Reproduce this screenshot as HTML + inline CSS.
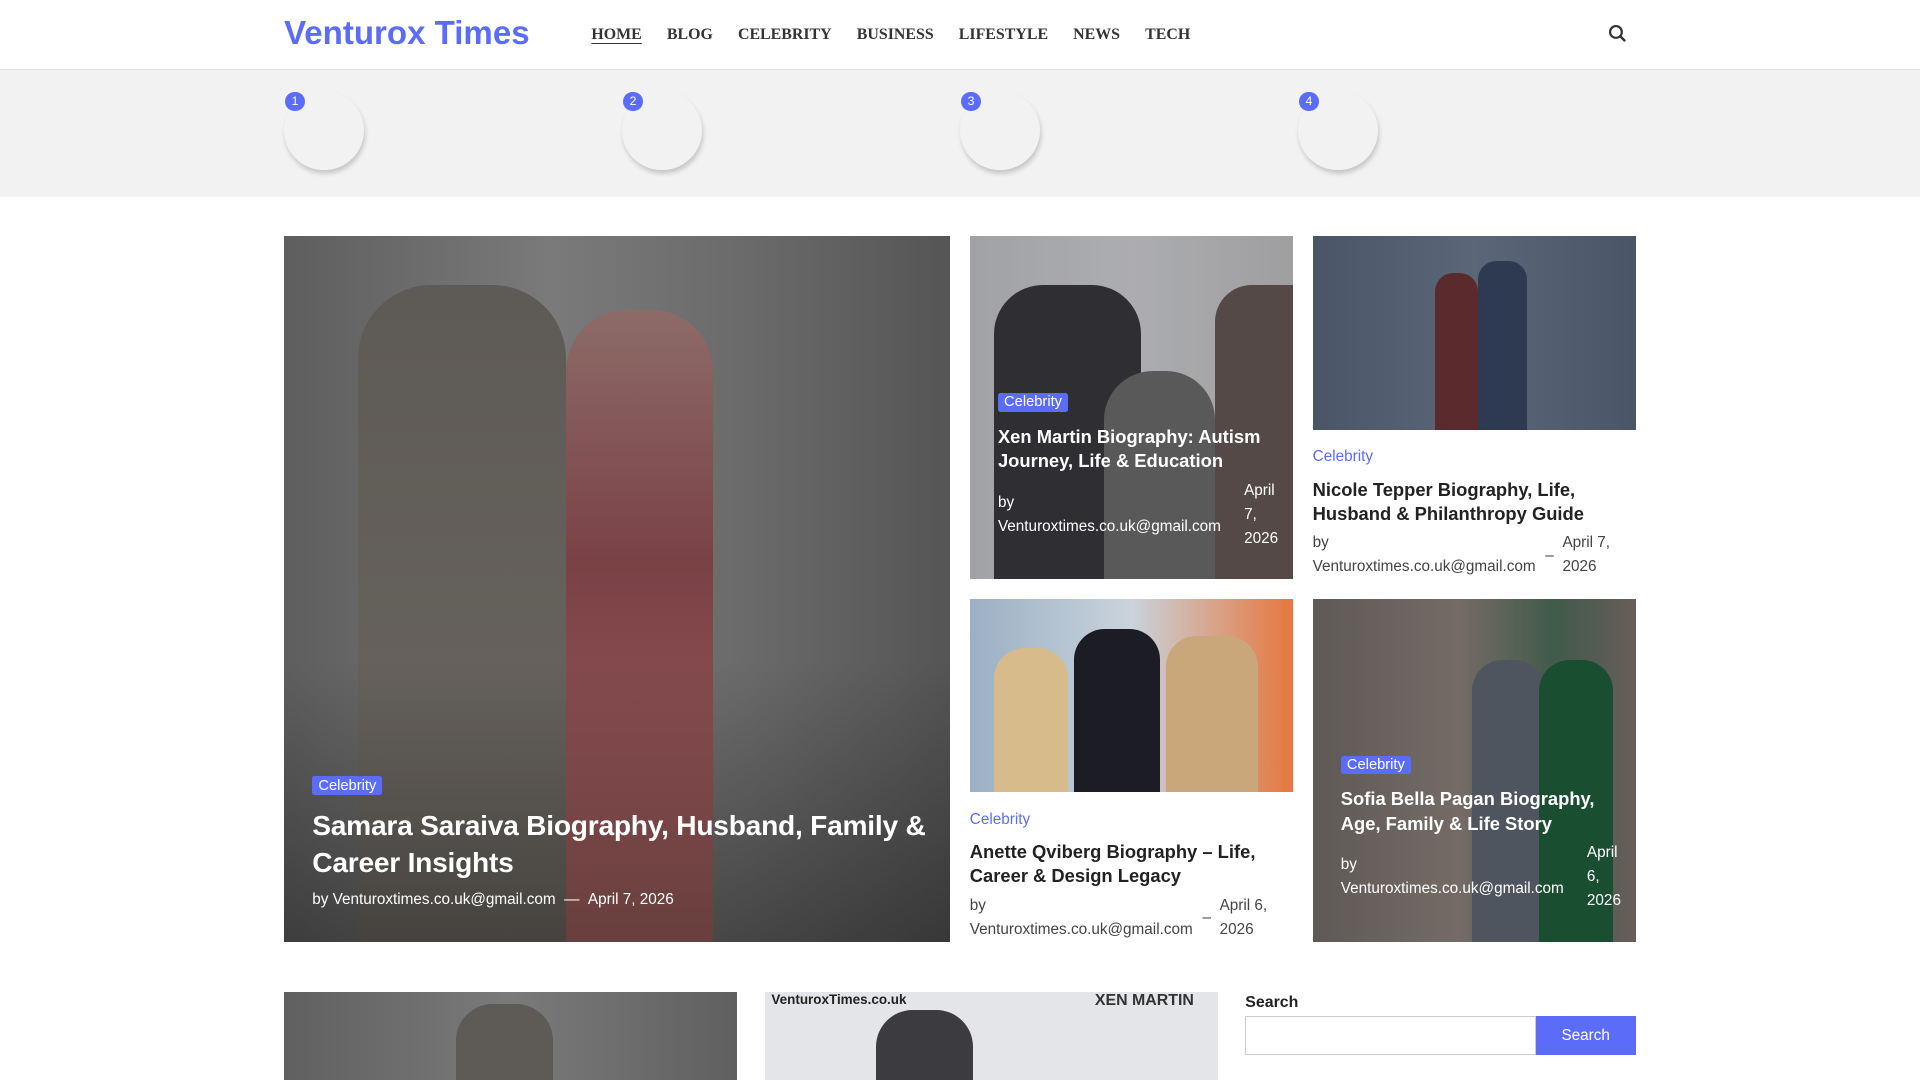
<!DOCTYPE html>
<html><head><meta charset="utf-8"><style>
*{box-sizing:border-box;margin:0;padding:0}
html,body{width:1920px;height:1080px;overflow:hidden;background:#fff}
#w{width:1568px;height:882px;zoom:1.22449;position:relative;font-family:"Liberation Sans",sans-serif;color:#222}
.hdr{position:absolute;left:0;top:0;width:1568px;height:57px;border-bottom:1px solid #e2e2e2;background:#fff}
.logo{position:absolute;left:232px;top:12px;font-size:27px;font-weight:bold;color:#5b6cf9;letter-spacing:0px}
.nav{position:absolute;left:483px;top:21px;font-family:"Liberation Serif",serif;font-size:13px;font-weight:bold;color:#333}
.nav span{margin-right:20.5px}
.nav span.a{text-decoration:underline;text-underline-offset:3px}
.strip{position:absolute;left:0;top:57px;width:1568px;height:104px;background:#f2f2f2}
.c{position:absolute;top:17px;width:65px;height:65px;border-radius:50%;background:#f2f2f2;box-shadow:1px 3px 4px rgba(0,0,0,.18)}
.n{position:absolute;top:18px;width:16px;height:16px;border-radius:50%;background:#5b6cf9;color:#fff;font-size:10px;text-align:center;line-height:16px}
.card{position:absolute;overflow:hidden}
.img{position:absolute;inset:0}
.tag{display:inline-block;background:#5b6cf9;color:#fff;font-size:12px;padding:1px 5px;border-radius:2px}
.ov{position:absolute;color:#fff}
.t{font-weight:bold;font-size:15px;line-height:20px}
.meta{font-size:12.5px;line-height:19.5px;color:#444}
.cat{color:#5b6cf9;font-size:12.5px}
</style></head><body><div id="w">
<div class="hdr">
<div class="logo">Venturox Times</div>
<div class="nav"><span class="a">HOME</span><span>BLOG</span><span>CELEBRITY</span><span>BUSINESS</span><span>LIFESTYLE</span><span>NEWS</span><span>TECH</span></div>
<svg style="position:absolute;left:1313px;top:20px" width="16" height="16" viewBox="0 0 16 16"><circle cx="6.5" cy="6.5" r="4.8" fill="none" stroke="#333" stroke-width="1.8"/><path d="M10 10l4 4" stroke="#333" stroke-width="2"/></svg>
</div>
<div class="strip">
<div class="c" style="left:232px"></div><div class="n" style="left:233px">1</div>
<div class="c" style="left:508px"></div><div class="n" style="left:509px">2</div>
<div class="c" style="left:784px"></div><div class="n" style="left:785px">3</div>
<div class="c" style="left:1060px"></div><div class="n" style="left:1061px">4</div>
</div>

<div class="card" style="left:232px;top:193px;width:544px;height:576px">
<div class="img" style="background:linear-gradient(90deg,#5e5e5e,#7a7a7a 40%,#6a6a6a 70%,#555)"></div>
<div style="position:absolute;left:60px;top:40px;width:170px;height:536px;background:linear-gradient(#5e5a55,#6b6660);border-radius:60px 60px 0 0"></div>
<div style="position:absolute;left:230px;top:60px;width:120px;height:516px;background:linear-gradient(#8d6b68,#7a4146 40%,#a0605f);border-radius:50px 50px 0 0"></div>
<div style="position:absolute;inset:0;background:linear-gradient(transparent 60%,rgba(0,0,0,.35))"></div>
<div class="ov" style="left:23px;top:438px"><span class="tag">Celebrity</span></div>
<div class="ov" style="left:23px;top:467px;font-weight:bold;font-size:23px;line-height:30px;width:520px;letter-spacing:-0.2px">Samara Saraiva Biography, Husband, Family &amp; Career Insights</div>
<div class="ov" style="left:23px;top:535px;font-size:12.5px">by Venturoxtimes.co.uk@gmail.com &nbsp;— &nbsp;April 7, 2026</div>
</div>

<div class="card" style="left:792px;top:193px;width:264px;height:280px">
<div class="img" style="background:linear-gradient(90deg,#c9cbd0,#d8d9dd 50%,#c7c6c8)"></div>
<div style="position:absolute;left:20px;top:40px;width:120px;height:240px;background:#3b3b40;border-radius:40px 40px 0 0"></div>
<div style="position:absolute;left:110px;top:110px;width:90px;height:170px;background:#707070;border-radius:40px 40px 0 0"></div>
<div style="position:absolute;left:200px;top:40px;width:64px;height:240px;background:#6a5c58;border-radius:30px 0 0 0"></div>
<div style="position:absolute;inset:0;background:rgba(0,0,0,.2)"></div>
<div class="ov" style="left:23px;top:125px"><span class="tag">Celebrity</span></div>
<div class="ov t" style="left:23px;top:154px;width:230px">Xen Martin Biography: Autism Journey, Life &amp; Education</div>
<div class="ov" style="left:23px;top:208px;font-size:12.5px;line-height:19.5px">by<br>Venturoxtimes.co.uk@gmail.com</div>
<div class="ov" style="left:224px;top:198px;font-size:12.5px;line-height:19.5px">April<br>7,<br>2026</div>
</div>

<div class="card" style="left:1072px;top:193px;width:264px;height:158px">
<div class="img" style="background:linear-gradient(90deg,#4a5566,#5b6678 50%,#4a5566)"></div>
<div style="position:absolute;left:100px;top:30px;width:35px;height:128px;background:#5a2a2c;border-radius:15px 15px 0 0"></div>
<div style="position:absolute;left:135px;top:20px;width:40px;height:138px;background:#2e3a52;border-radius:15px 15px 0 0"></div>
</div>
<div class="cat" style="position:absolute;left:1072px;top:366px">Celebrity</div>
<div class="t" style="position:absolute;left:1072px;top:390px;width:260px">Nicole Tepper Biography, Life, Husband &amp; Philanthropy Guide</div>
<div class="meta" style="position:absolute;left:1072px;top:434px">by<br>Venturoxtimes.co.uk@gmail.com</div>
<div class="meta" style="position:absolute;left:1262px;top:444px">–</div>
<div class="meta" style="position:absolute;left:1276px;top:434px">April 7,<br>2026</div>

<div class="card" style="left:792px;top:489px;width:264px;height:158px">
<div class="img" style="background:linear-gradient(90deg,#9bb0c4,#c9d3dc 50%,#e57a44 98%)"></div>
<div style="position:absolute;left:20px;top:40px;width:60px;height:118px;background:#d8bb8a;border-radius:25px 25px 0 0"></div>
<div style="position:absolute;left:85px;top:25px;width:70px;height:133px;background:#1c1d24;border-radius:25px 25px 0 0"></div>
<div style="position:absolute;left:160px;top:30px;width:75px;height:128px;background:#c9a77a;border-radius:25px 25px 0 0"></div>
</div>
<div class="cat" style="position:absolute;left:792px;top:662px">Celebrity</div>
<div class="t" style="position:absolute;left:792px;top:686px;width:260px">Anette Qviberg Biography – Life, Career &amp; Design Legacy</div>
<div class="meta" style="position:absolute;left:792px;top:730px">by<br>Venturoxtimes.co.uk@gmail.com</div>
<div class="meta" style="position:absolute;left:982px;top:740px">–</div>
<div class="meta" style="position:absolute;left:996px;top:730px">April 6,<br>2026</div>

<div class="card" style="left:1072px;top:489px;width:264px;height:280px">
<div class="img" style="background:linear-gradient(90deg,#6f6a66,#8a7e78 45%,#4d6b58 75%,#7b6f6a)"></div>
<div style="position:absolute;left:130px;top:50px;width:60px;height:230px;background:#5d6470;border-radius:25px 25px 0 0"></div>
<div style="position:absolute;left:185px;top:50px;width:60px;height:230px;background:#1f5c3a;border-radius:25px 25px 0 0"></div>
<div style="position:absolute;inset:0;background:rgba(0,0,0,.15)"></div>
<div class="ov" style="left:23px;top:125px"><span class="tag">Celebrity</span></div>
<div class="ov t" style="left:23px;top:154px;width:230px">Sofia Bella Pagan Biography, Age, Family &amp; Life Story</div>
<div class="ov" style="left:23px;top:208px;font-size:12.5px;line-height:19.5px">by<br>Venturoxtimes.co.uk@gmail.com</div>
<div class="ov" style="left:224px;top:198px;font-size:12.5px;line-height:19.5px">April<br>6,<br>2026</div>
</div>

<div class="card" style="left:232px;top:810px;width:370px;height:72px;background:linear-gradient(90deg,#606060,#7a7a7a,#606060)"><div style="position:absolute;left:140px;top:10px;width:80px;height:62px;background:#5e5a55;border-radius:30px 30px 0 0"></div></div>
<div class="card" style="left:625px;top:810px;width:370px;height:72px;background:#e4e5e8"><div style="position:absolute;left:90px;top:15px;width:80px;height:57px;background:#3b3b40;border-radius:30px 30px 0 0"></div><div style="position:absolute;left:5px;top:0;font-size:11px;font-weight:bold;color:#222">VenturoxTimes.co.uk</div><div style="position:absolute;right:20px;top:0;font-size:13px;font-weight:bold;color:#333">XEN MARTIN</div></div>

<div style="position:absolute;left:1017px;top:812px;font-size:13px;font-weight:bold">Search</div>
<div style="position:absolute;left:1017px;top:830px;width:237px;height:32px;border:1px solid #ccc"></div>
<div style="position:absolute;left:1254px;top:830px;width:82px;height:32px;background:#5b6cf9;color:#fff;font-size:12.5px;text-align:center;line-height:32px">Search</div>
</div></body></html>
